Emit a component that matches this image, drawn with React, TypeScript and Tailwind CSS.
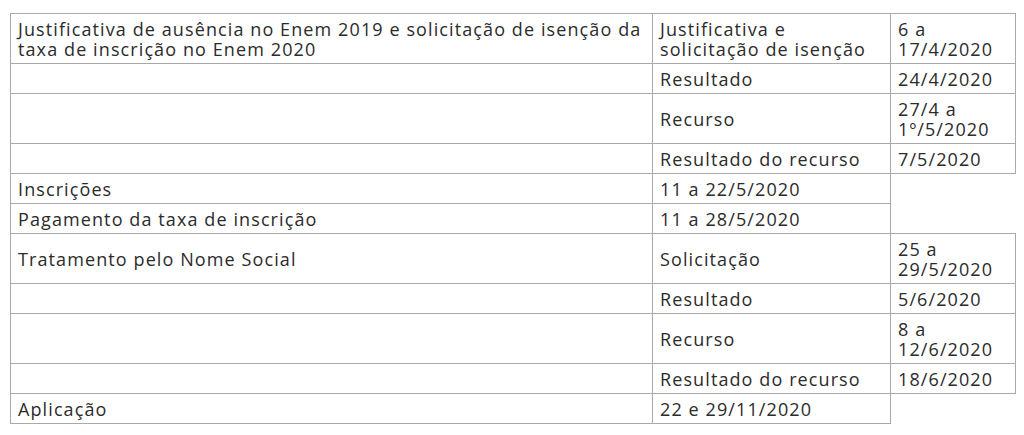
import React from "react";

const rows: React.ReactNode[][] = [
  [
    <>Justificativa de ausência no Enem 2019 e solicitação de isenção da<br />taxa de inscrição no Enem 2020</>,
    <>Justificativa e<br />solicitação de isenção</>,
    <>6 a<br />17/4/2020</>,
  ],
  ["", "Resultado", "24/4/2020"],
  ["", "Recurso", <>27/4 a<br />1º/5/2020</>],
  ["", "Resultado do recurso", "7/5/2020"],
  ["Inscrições", "11 a 22/5/2020"],
  ["Pagamento da taxa de inscrição", "11 a 28/5/2020"],
  ["Tratamento pelo Nome Social", "Solicitação", <>25 a<br />29/5/2020</>],
  ["", "Resultado", "5/6/2020"],
  ["", "Recurso", <>8 a<br />12/6/2020</>],
  ["", "Resultado do recurso", "18/6/2020"],
  ["Aplicação", "22 e 29/11/2020"],
];

export default function App() {
  return (
    <div className="w-[1024px] h-[435px] bg-white pl-[10px] pt-[13px]">
      <table
        className="table-fixed border-collapse w-[1005px] text-[18px] leading-[20px] tracking-[1.1px] text-[#2b2b2b]"
        style={{ fontFamily: '"Open Sans", sans-serif' }}
      >
        <colgroup>
          <col className="w-[642px]" />
          <col className="w-[238px]" />
          <col className="w-[125px]" />
        </colgroup>
        <tbody>
          {rows.map((r, i) => (
            <tr key={i}>
              {r.map((c, j) => (
                <td
                  key={j}
                  className="border border-[#aaaaaa] pl-[7px] pr-[2px] pt-[5px] pb-[4px] align-middle whitespace-nowrap overflow-hidden"
                >
                  {c}
                </td>
              ))}
            </tr>
          ))}
        </tbody>
      </table>
    </div>
  );
}
